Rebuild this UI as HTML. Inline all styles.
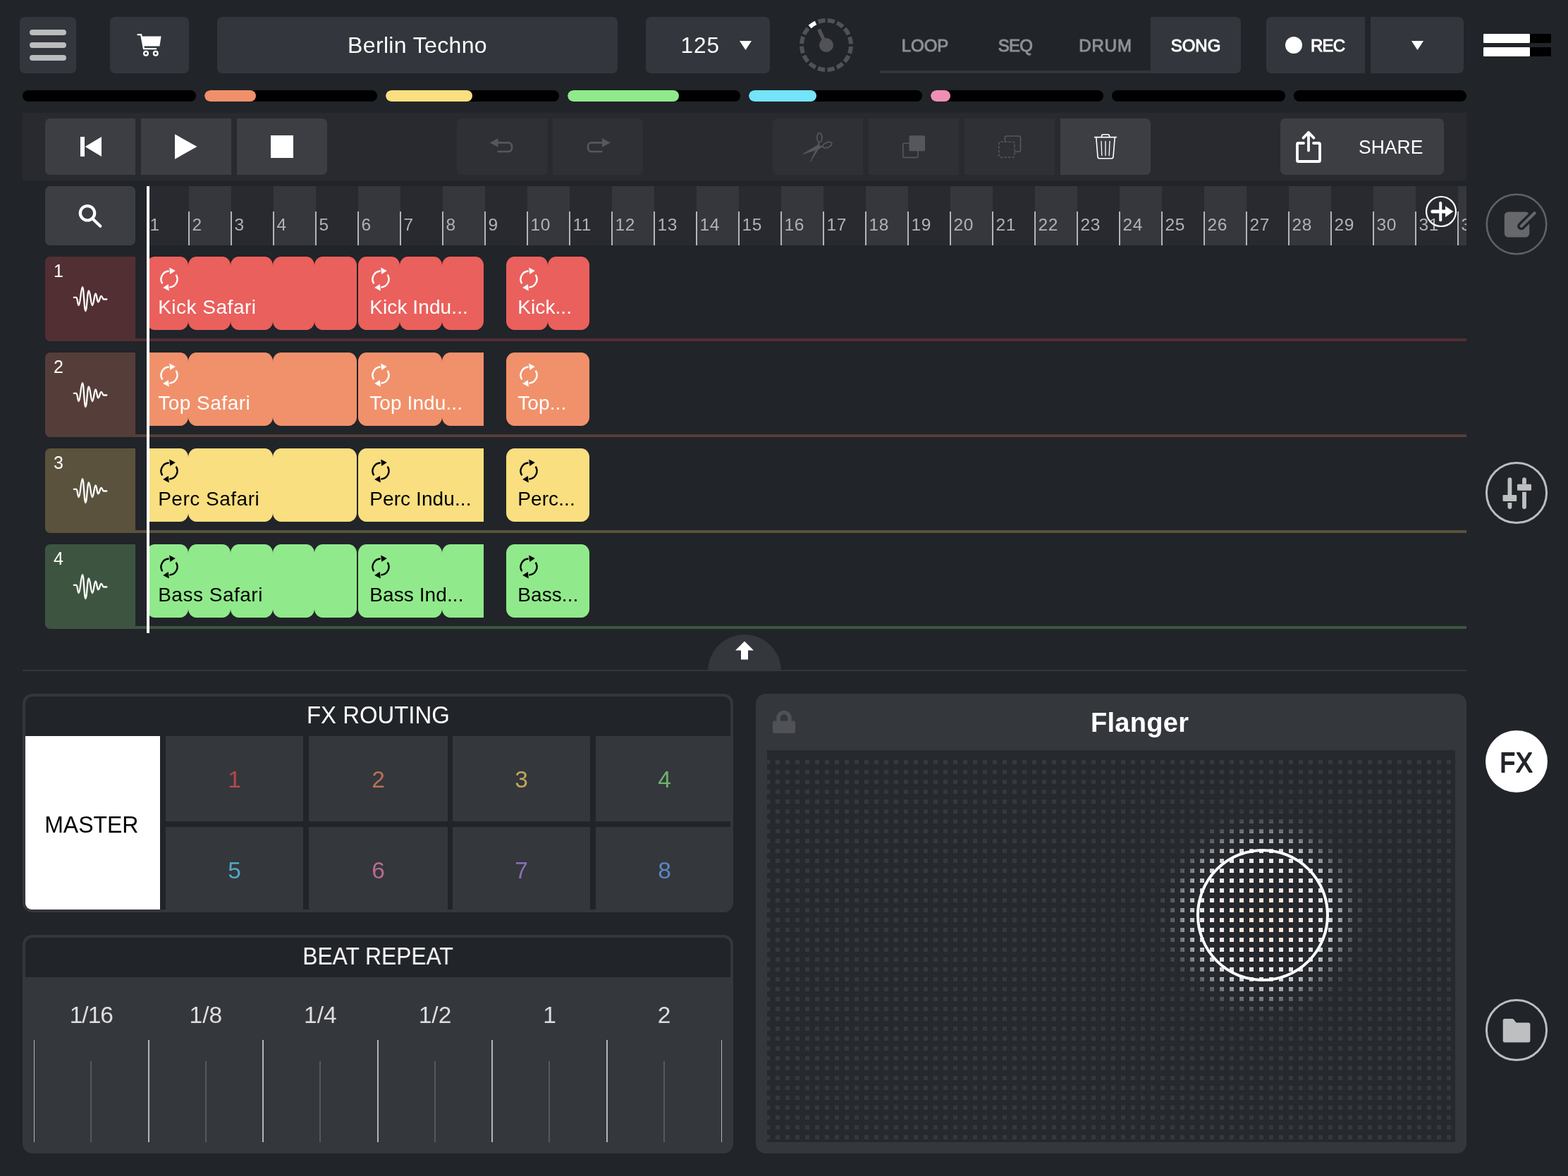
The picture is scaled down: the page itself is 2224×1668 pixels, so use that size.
<!DOCTYPE html>
<html lang="en">
<head>
<meta charset="utf-8">
<title>Berlin Techno - Song</title>
<style>
*{box-sizing:border-box;margin:0;padding:0}
html,body{width:2224px;height:1668px;overflow:hidden;background:#212429}
body{position:relative;font-family:"Liberation Sans",sans-serif;color:#fff}
#root{position:absolute;left:0;top:0;width:2224px;height:1668px;overflow:hidden;will-change:transform}
.a{position:absolute}
.btn{position:absolute;background:#33363c;border-radius:7px}
.c{display:flex;align-items:center;justify-content:center}
svg{position:absolute;overflow:visible}
.bar{position:absolute;top:128px;height:16px;border-radius:8px;background:#000;overflow:hidden}
.bar i{position:absolute;left:0;top:0;height:16px;border-radius:8px}
.tb{position:absolute;top:168px;width:128px;height:80px;background:#3c3e44}
.tb.d{background:#2e3035}
.tab{position:absolute;top:24px;height:80px;padding-top:1px;font-size:24px;color:#8f9093;-webkit-text-stroke:1px currentColor}

.rn{position:absolute;top:303px;font-size:24.5px;letter-spacing:.5px;line-height:30px;color:#b1b2b4}
.rt{position:absolute;top:300px;width:2px;height:48px;background:#b4b5b7}
.th{position:absolute;left:64px;width:128px;height:120px;border-radius:7px 0 0 7px}
.th span{position:absolute;left:12px;top:4px;font-size:25px;line-height:32px}
.tl{position:absolute;left:192px;width:1888px;height:4px}
.sg{position:absolute;height:104px;border-radius:11.5px/12.5px}
.ct{position:absolute;font-size:28px;letter-spacing:.5px;line-height:32px;white-space:nowrap}


.pn{position:absolute;left:32px;width:1008px;border-radius:14px;background:#34373c;overflow:hidden}
.pi{position:absolute;left:4px;top:4px;width:1000px;height:302px;border-radius:10px;background:#212429}
.pt{position:absolute;left:4px;top:4px;width:1000px;height:56px;font-size:34.5px;padding-bottom:3px;border-radius:10px 10px 0 0}
.pt span{display:block;transform:scaleX(.953)}
.fc{position:absolute;background:#34373c;font-size:33.5px;padding-top:2px}
.bl{position:absolute;top:1414px;width:160px;text-align:center;font-size:33.5px;line-height:52px;color:#dddddf}
.mj{position:absolute;top:1475px;width:2px;height:145px;background:#b3b4b6}
.mn{position:absolute;top:1505px;width:2px;height:115px;background:#55585d}

</style>
</head>
<body>
<div id="root">
<!-- ===== TOP BAR ===== -->
<div class="btn" style="left:28px;top:24px;width:80px;height:80px">
  <div class="a" style="left:14px;top:18px;width:52px;height:8px;border-radius:4px;background:#bbbcbe"></div>
  <div class="a" style="left:14px;top:36px;width:52px;height:8px;border-radius:4px;background:#bbbcbe"></div>
  <div class="a" style="left:14px;top:54px;width:52px;height:8px;border-radius:4px;background:#bbbcbe"></div>
</div>
<div class="btn" style="left:156px;top:24px;width:112px;height:80px">
  <svg style="left:38px;top:22px" width="36" height="36" viewBox="0 0 36 36">
    <path d="M1.5 3.2H6.2L10 23.2H27.2" fill="none" stroke="#fff" stroke-width="2.2" stroke-linecap="round" stroke-linejoin="round"/>
    <path d="M7.3 5.6H34.6L32.4 19.4H10z" fill="#fff"/>
    <circle cx="13" cy="29.8" r="2.9" fill="none" stroke="#fff" stroke-width="2.2"/>
    <circle cx="26.8" cy="29.8" r="2.9" fill="none" stroke="#fff" stroke-width="2.2"/>
  </svg>
</div>
<div class="btn c" style="left:308px;top:24px;width:568px;height:80px;font-size:32px;letter-spacing:.35px;padding-top:1px">Berlin Techno</div>
<div class="btn" style="left:916px;top:24px;width:176px;height:80px">
  <span class="a" style="left:49.5px;top:22px;font-size:31.5px;letter-spacing:1px;line-height:36px">125</span>
  <svg style="left:133px;top:34px" width="17" height="13" viewBox="0 0 17 13"><path d="M0 0H17L8.5 13z" fill="#fff"/></svg>
</div>
<!-- knob -->
<svg style="left:1132px;top:24px" width="80" height="80" viewBox="0 0 80 80">
  <circle cx="40" cy="40" r="35" fill="none" stroke="#505257" stroke-width="6" stroke-dasharray="10.14 3.604" stroke-dashoffset="-1.8" transform="rotate(-90 40 40)"/>
  <path d="M16.56 14.01A35 35 0 0 1 24.96 8.40" stroke="#fff" stroke-width="6" fill="none"/>
  <circle cx="40" cy="40" r="10" fill="#505257"/>
  <path d="M40 40L29.5 17.7" stroke="#505257" stroke-width="5.2"/>
</svg>
<!-- tabs -->
<div class="a" style="left:1248px;top:100px;width:384px;height:4px;background:#33363c"></div>
<div class="tab c" style="left:1248px;width:128px">LOOP</div>
<div class="tab c" style="left:1376px;width:128px;letter-spacing:-.8px">SEQ</div>
<div class="tab c" style="left:1504px;width:128px;letter-spacing:.9px">DRUM</div>
<div class="tab c" style="left:1632px;width:128px;background:#33363c;color:#fff;border-radius:0 7px 7px 0">SONG</div>
<!-- rec -->
<div class="btn" style="left:1796px;top:24px;width:140px;height:80px;border-radius:7px 0 0 7px">
  <div class="a" style="left:27px;top:28px;width:24px;height:24px;border-radius:50%;background:#fff"></div>
  <span class="a" style="left:63px;top:23px;font-size:24px;-webkit-text-stroke:1px #fff;letter-spacing:-.8px;line-height:36px">REC</span>
</div>
<div class="btn" style="left:1944px;top:24px;width:132px;height:80px;border-radius:0 7px 7px 0">
  <svg style="left:58px;top:34px" width="17" height="13" viewBox="0 0 17 13"><path d="M0 0H17L8.5 13z" fill="#fff"/></svg>
</div>
<!-- level meter -->
<div class="a" style="left:2104px;top:48px;width:96px;height:13px;background:#000;border-radius:1px"></div>
<div class="a" style="left:2104px;top:67px;width:96px;height:13px;background:#000;border-radius:1px"></div>
<div class="a" style="left:2104px;top:48px;width:66px;height:13px;background:#fff;border-radius:1px"></div>
<div class="a" style="left:2104px;top:67px;width:66px;height:13px;background:#fff;border-radius:1px"></div>

<!-- ===== TRACK LEVEL BARS ===== -->
<div class="bar" style="left:32px;width:246px"></div>
<div class="bar" style="left:290px;width:245px"><i style="width:73px;background:#f0906b"></i></div>
<div class="bar" style="left:547px;width:246px"><i style="width:123px;background:#f9df80"></i></div>
<div class="bar" style="left:805px;width:245px"><i style="width:158px;background:#90ea8b"></i></div>
<div class="bar" style="left:1062px;width:246px"><i style="width:96px;background:#74e4f8"></i></div>
<div class="bar" style="left:1320px;width:245px"><i style="width:28px;background:#f08fb4"></i></div>
<div class="bar" style="left:1577px;width:246px"></div>
<div class="bar" style="left:1835px;width:245px"></div>

<!-- ===== TRANSPORT ===== -->
<div class="a" style="left:32px;top:160px;width:2048px;height:96px;background:#282a30"></div>
<div class="tb" style="left:64px;border-radius:7px 0 0 7px">
  <svg style="left:0;top:0" width="128" height="80"><path d="M50 26h6v28h-6zM56.6 40L80 26v28z" fill="#fff"/></svg>
</div>
<div class="tb" style="left:200px">
  <svg style="left:0;top:0" width="128" height="80"><path d="M48 22.3L79.5 40L48 57.7z" fill="#fff"/></svg>
</div>
<div class="tb" style="left:336px;border-radius:0 7px 7px 0">
  <div class="a" style="left:48px;top:24px;width:32px;height:32px;background:#fff"></div>
</div>
<div class="tb d" style="left:648px;border-radius:7px 0 0 7px">
  <svg style="left:0;top:0" width="128" height="80"><path d="M57 34.4H73a5 5 0 0 1 5 5V42a5 5 0 0 1 -5 5H57.5" fill="none" stroke="#55575c" stroke-width="2.6"/><path d="M46.8 34.4L58.5 28v12.8z" fill="#55575c"/></svg>
</div>
<div class="tb d" style="left:784px;border-radius:0 7px 7px 0">
  <svg style="left:0;top:0" width="128" height="80"><path d="M71 34.4H55a5 5 0 0 0 -5 5V42a5 5 0 0 0 5 5H70.5" fill="none" stroke="#55575c" stroke-width="2.6"/><path d="M81.7 34.4L70 28v12.8z" fill="#55575c"/></svg>
</div>
<div class="tb d" style="left:1096px;border-radius:7px 0 0 7px">
  <svg style="left:0;top:0" width="128" height="80" fill="none" stroke="#55575c" stroke-width="1.7" stroke-linejoin="round">
    <ellipse cx="66.4" cy="27.2" rx="3.6" ry="6.6"/>
    <ellipse cx="77.4" cy="37.6" rx="6.8" ry="3.6" transform="rotate(-22 77.4 37.6)"/>
    <path d="M65.3 33.8L66.3 40.6L53.6 61.2L62.4 42.2z" fill="#55575c" stroke-width="1"/>
    <path d="M70.9 39.6L65.6 43.2L43 50.4L62.6 38.6z" fill="#55575c" stroke-width="1"/>
  </svg>
</div>
<div class="tb d" style="left:1232px">
  <svg style="left:0;top:0" width="128" height="80"><rect x="48.8" y="35.2" width="21.2" height="20.2" rx="1.5" fill="none" stroke="#55575c" stroke-width="1.6"/><rect x="57.5" y="24.3" width="22.5" height="22" rx="1.5" fill="#55575c"/></svg>
</div>
<div class="tb d" style="left:1368px">
  <svg style="left:0;top:0" width="128" height="80" fill="none" stroke="#55575c" stroke-width="1.6"><rect x="57.3" y="25" width="22.2" height="22" rx="2.5"/><rect x="48.8" y="33.2" width="22.2" height="22" rx="2.5" fill="#2e3035" stroke-dasharray="3.6 2"/></svg>
</div>
<div class="tb" style="left:1504px;border-radius:0 7px 7px 0">
  <svg style="left:0;top:0" width="128" height="80" fill="none" stroke="#fff" stroke-width="1.6" stroke-linecap="round" stroke-linejoin="round">
    <path d="M48.6 26.6H79.4M58.4 26.4V25.4A2.6 2.6 0 0 1 61 22.8H67A2.6 2.6 0 0 1 69.600 25.4V26.4"/>
    <path d="M50.8 27L53 54.4A2.6 2.6 0 0 0 55.600 56.8H72.4A2.6 2.6 0 0 0 75 54.4L77.2 27"/>
    <path d="M58 32.500L58.800 52.500M64 32.500V52.500M70 32.500L69.200 52.500" stroke-width="1.3"/>
  </svg>
</div>
<div class="tb" style="left:1816px;width:232px;border-radius:7px">
  <svg style="left:0;top:0" width="232" height="80" fill="none" stroke="#fff" stroke-width="3.8" stroke-linecap="round" stroke-linejoin="round">
    <path d="M33 35H25.500A1.600 1.600 0 0 0 24 36.600V59.400A1.600 1.600 0 0 0 25.600 61H54.400A1.600 1.600 0 0 0 56 59.400V36.600A1.600 1.600 0 0 0 54.400 35H47"/>
    <path d="M40 45.500V20.800M32.600 27.600L40 19.800L47.400 27.600"/>
  </svg>
  <span class="a" style="left:110.5px;top:22px;font-size:28.5px;line-height:36px;transform:scaleX(.93);transform-origin:0 50%">SHARE</span>
</div>

<!-- ===== TIMELINE ===== -->
<div class="btn" style="left:64px;top:264px;width:128px;height:84px;background:#3c3e44"><svg style="left:0;top:0" width="128" height="84" fill="none" stroke="#fff" stroke-width="4.2" stroke-linecap="round"><circle cx="60" cy="38.300" r="10.200"/><path d="M67.800 46.800L78.300 56.800"/></svg></div>
<div class="a" style="left:208px;top:264px;width:1872px;height:84px;overflow:hidden;background:#282a2f">
<div class="a" style="left:60px;top:0;width:60px;height:84px;background:#36373c"></div>
<div class="a" style="left:180px;top:0;width:60px;height:84px;background:#36373c"></div>
<div class="a" style="left:300px;top:0;width:60px;height:84px;background:#36373c"></div>
<div class="a" style="left:420px;top:0;width:60px;height:84px;background:#36373c"></div>
<div class="a" style="left:540px;top:0;width:60px;height:84px;background:#36373c"></div>
<div class="a" style="left:660px;top:0;width:60px;height:84px;background:#36373c"></div>
<div class="a" style="left:780px;top:0;width:60px;height:84px;background:#36373c"></div>
<div class="a" style="left:900px;top:0;width:60px;height:84px;background:#36373c"></div>
<div class="a" style="left:1020px;top:0;width:60px;height:84px;background:#36373c"></div>
<div class="a" style="left:1140px;top:0;width:60px;height:84px;background:#36373c"></div>
<div class="a" style="left:1260px;top:0;width:60px;height:84px;background:#36373c"></div>
<div class="a" style="left:1380px;top:0;width:60px;height:84px;background:#36373c"></div>
<div class="a" style="left:1500px;top:0;width:60px;height:84px;background:#36373c"></div>
<div class="a" style="left:1620px;top:0;width:60px;height:84px;background:#36373c"></div>
<div class="a" style="left:1740px;top:0;width:60px;height:84px;background:#36373c"></div>
<div class="a" style="left:1860px;top:0;width:60px;height:84px;background:#36373c"></div>
<span class="rn" style="left:4.5px;top:40px">1</span>
<div class="rt" style="left:59px;top:36px"></div>
<span class="rn" style="left:64.5px;top:40px">2</span>
<div class="rt" style="left:119px;top:36px"></div>
<span class="rn" style="left:124.5px;top:40px">3</span>
<div class="rt" style="left:179px;top:36px"></div>
<span class="rn" style="left:184.5px;top:40px">4</span>
<div class="rt" style="left:239px;top:36px"></div>
<span class="rn" style="left:244.5px;top:40px">5</span>
<div class="rt" style="left:299px;top:36px"></div>
<span class="rn" style="left:304.5px;top:40px">6</span>
<div class="rt" style="left:359px;top:36px"></div>
<span class="rn" style="left:364.5px;top:40px">7</span>
<div class="rt" style="left:419px;top:36px"></div>
<span class="rn" style="left:424.5px;top:40px">8</span>
<div class="rt" style="left:479px;top:36px"></div>
<span class="rn" style="left:484.5px;top:40px">9</span>
<div class="rt" style="left:539px;top:36px"></div>
<span class="rn" style="left:544.5px;top:40px">10</span>
<div class="rt" style="left:599px;top:36px"></div>
<span class="rn" style="left:604.5px;top:40px">11</span>
<div class="rt" style="left:659px;top:36px"></div>
<span class="rn" style="left:664.5px;top:40px">12</span>
<div class="rt" style="left:719px;top:36px"></div>
<span class="rn" style="left:724.5px;top:40px">13</span>
<div class="rt" style="left:779px;top:36px"></div>
<span class="rn" style="left:784.5px;top:40px">14</span>
<div class="rt" style="left:839px;top:36px"></div>
<span class="rn" style="left:844.5px;top:40px">15</span>
<div class="rt" style="left:899px;top:36px"></div>
<span class="rn" style="left:904.5px;top:40px">16</span>
<div class="rt" style="left:959px;top:36px"></div>
<span class="rn" style="left:964.5px;top:40px">17</span>
<div class="rt" style="left:1019px;top:36px"></div>
<span class="rn" style="left:1024.5px;top:40px">18</span>
<div class="rt" style="left:1079px;top:36px"></div>
<span class="rn" style="left:1084.5px;top:40px">19</span>
<div class="rt" style="left:1139px;top:36px"></div>
<span class="rn" style="left:1144.5px;top:40px">20</span>
<div class="rt" style="left:1199px;top:36px"></div>
<span class="rn" style="left:1204.5px;top:40px">21</span>
<div class="rt" style="left:1259px;top:36px"></div>
<span class="rn" style="left:1264.5px;top:40px">22</span>
<div class="rt" style="left:1319px;top:36px"></div>
<span class="rn" style="left:1324.5px;top:40px">23</span>
<div class="rt" style="left:1379px;top:36px"></div>
<span class="rn" style="left:1384.5px;top:40px">24</span>
<div class="rt" style="left:1439px;top:36px"></div>
<span class="rn" style="left:1444.5px;top:40px">25</span>
<div class="rt" style="left:1499px;top:36px"></div>
<span class="rn" style="left:1504.5px;top:40px">26</span>
<div class="rt" style="left:1559px;top:36px"></div>
<span class="rn" style="left:1564.5px;top:40px">27</span>
<div class="rt" style="left:1619px;top:36px"></div>
<span class="rn" style="left:1624.5px;top:40px">28</span>
<div class="rt" style="left:1679px;top:36px"></div>
<span class="rn" style="left:1684.5px;top:40px">29</span>
<div class="rt" style="left:1739px;top:36px"></div>
<span class="rn" style="left:1744.5px;top:40px">30</span>
<div class="rt" style="left:1799px;top:36px"></div>
<span class="rn" style="left:1804.5px;top:40px">31</span>
<div class="rt" style="left:1859px;top:36px"></div>
<span class="rn" style="left:1864.5px;top:40px">32</span>
</div>
<div class="th" style="top:364px;background:#522f33"><span>1</span><svg style="left:0;top:0" width="128" height="120" fill="none" stroke="#fff" stroke-width="2.3" stroke-linecap="round" stroke-linejoin="round"><path d="M40.8 57.8H44.4C45.79 57.80 46.31 69.10 47.70 69.10C49.93 69.10 50.77 43.20 53.00 43.20C54.81 43.20 55.49 77.00 57.30 77.00C59.23 77.00 59.97 48.50 61.90 48.50C64.04 48.50 64.86 69.10 67.00 69.10C68.93 69.10 69.67 52.50 71.60 52.50C73.15 52.50 73.75 64.40 75.30 64.40C77.11 64.40 77.79 55.80 79.60 55.80C80.99 55.80 81.51 60.50 82.90 60.50H87.3"/></svg></div>
<div class="tl" style="top:480px;background:#522f33"></div>
<div class="sg" style="left:208px;top:364px;width:59px;background:#ea605c"></div>
<div class="sg" style="left:267px;top:364px;width:60px;background:#ea605c"></div>
<div class="sg" style="left:327px;top:364px;width:60px;background:#ea605c"></div>
<div class="sg" style="left:387px;top:364px;width:59px;background:#ea605c"></div>
<div class="sg" style="left:446px;top:364px;width:60px;background:#ea605c"></div>
<svg style="left:240px;top:396px" width="2" height="2"><g fill="none" stroke="#fff" stroke-width="2.4"><path d="M-9.64 6.26A11.5 11.5 0 0 1 -0.40 -11.49"/><path d="M9.64 -6.26A11.5 11.5 0 0 1 0.40 11.49"/></g><path d="M8.8 -11.9L0.2 -16.4L1.2 -7z" fill="#fff"/><path d="M-8.8 11.9L-0.2 16.4L-1.2 7z" fill="#fff"/></svg>
<span class="ct" style="left:224.2px;top:419.5px;color:#fff">Kick Safari</span>
<div class="sg" style="left:508px;top:364px;width:59px;background:#ea605c"></div>
<div class="sg" style="left:567px;top:364px;width:60px;background:#ea605c"></div>
<div class="sg" style="left:627px;top:364px;width:59px;background:#ea605c"></div>
<svg style="left:540px;top:396px" width="2" height="2"><g fill="none" stroke="#fff" stroke-width="2.4"><path d="M-9.64 6.26A11.5 11.5 0 0 1 -0.40 -11.49"/><path d="M9.64 -6.26A11.5 11.5 0 0 1 0.40 11.49"/></g><path d="M8.8 -11.9L0.2 -16.4L1.2 -7z" fill="#fff"/><path d="M-8.8 11.9L-0.2 16.4L-1.2 7z" fill="#fff"/></svg>
<span class="ct" style="left:524.2px;top:419.5px;color:#fff;letter-spacing:.1px">Kick Indu...</span>
<div class="sg" style="left:718px;top:364px;width:59px;background:#ea605c"></div>
<div class="sg" style="left:777px;top:364px;width:59px;background:#ea605c"></div>
<svg style="left:750px;top:396px" width="2" height="2"><g fill="none" stroke="#fff" stroke-width="2.4"><path d="M-9.64 6.26A11.5 11.5 0 0 1 -0.40 -11.49"/><path d="M9.64 -6.26A11.5 11.5 0 0 1 0.40 11.49"/></g><path d="M8.8 -11.9L0.2 -16.4L1.2 -7z" fill="#fff"/><path d="M-8.8 11.9L-0.2 16.4L-1.2 7z" fill="#fff"/></svg>
<span class="ct" style="left:734.2px;top:419.5px;color:#fff;letter-spacing:.1px">Kick...</span>
<div class="th" style="top:500px;background:#553e39"><span>2</span><svg style="left:0;top:0" width="128" height="120" fill="none" stroke="#fff" stroke-width="2.3" stroke-linecap="round" stroke-linejoin="round"><path d="M40.8 57.8H44.4C45.79 57.80 46.31 69.10 47.70 69.10C49.93 69.10 50.77 43.20 53.00 43.20C54.81 43.20 55.49 77.00 57.30 77.00C59.23 77.00 59.97 48.50 61.90 48.50C64.04 48.50 64.86 69.10 67.00 69.10C68.93 69.10 69.67 52.50 71.60 52.50C73.15 52.50 73.75 64.40 75.30 64.40C77.11 64.40 77.79 55.80 79.60 55.80C80.99 55.80 81.51 60.50 82.90 60.50H87.3"/></svg></div>
<div class="tl" style="top:616px;background:#553e39"></div>
<div class="sg" style="left:208px;top:500px;width:59px;background:#f0916b;border-radius:0 11.5px 11.5px 0/0 12.5px 12.5px 0"></div>
<div class="sg" style="left:267px;top:500px;width:120px;background:#f0916b"></div>
<div class="sg" style="left:387px;top:500px;width:119px;background:#f0916b"></div>
<svg style="left:240px;top:532px" width="2" height="2"><g fill="none" stroke="#fff" stroke-width="2.4"><path d="M-9.64 6.26A11.5 11.5 0 0 1 -0.40 -11.49"/><path d="M9.64 -6.26A11.5 11.5 0 0 1 0.40 11.49"/></g><path d="M8.8 -11.9L0.2 -16.4L1.2 -7z" fill="#fff"/><path d="M-8.8 11.9L-0.2 16.4L-1.2 7z" fill="#fff"/></svg>
<span class="ct" style="left:224.2px;top:555.5px;color:#fff">Top Safari</span>
<div class="sg" style="left:508px;top:500px;width:119px;background:#f0916b"></div>
<div class="sg" style="left:627px;top:500px;width:59px;background:#f0916b;border-radius:11.5px 0 0 11.5px/12.5px 0 0 12.5px"></div>
<svg style="left:540px;top:532px" width="2" height="2"><g fill="none" stroke="#fff" stroke-width="2.4"><path d="M-9.64 6.26A11.5 11.5 0 0 1 -0.40 -11.49"/><path d="M9.64 -6.26A11.5 11.5 0 0 1 0.40 11.49"/></g><path d="M8.8 -11.9L0.2 -16.4L1.2 -7z" fill="#fff"/><path d="M-8.8 11.9L-0.2 16.4L-1.2 7z" fill="#fff"/></svg>
<span class="ct" style="left:524.2px;top:555.5px;color:#fff;letter-spacing:.1px">Top Indu...</span>
<div class="sg" style="left:718px;top:500px;width:118px;background:#f0916b"></div>
<svg style="left:750px;top:532px" width="2" height="2"><g fill="none" stroke="#fff" stroke-width="2.4"><path d="M-9.64 6.26A11.5 11.5 0 0 1 -0.40 -11.49"/><path d="M9.64 -6.26A11.5 11.5 0 0 1 0.40 11.49"/></g><path d="M8.8 -11.9L0.2 -16.4L1.2 -7z" fill="#fff"/><path d="M-8.8 11.9L-0.2 16.4L-1.2 7z" fill="#fff"/></svg>
<span class="ct" style="left:734.2px;top:555.5px;color:#fff;letter-spacing:.1px">Top...</span>
<div class="th" style="top:636px;background:#5a523c"><span>3</span><svg style="left:0;top:0" width="128" height="120" fill="none" stroke="#fff" stroke-width="2.3" stroke-linecap="round" stroke-linejoin="round"><path d="M40.8 57.8H44.4C45.79 57.80 46.31 69.10 47.70 69.10C49.93 69.10 50.77 43.20 53.00 43.20C54.81 43.20 55.49 77.00 57.30 77.00C59.23 77.00 59.97 48.50 61.90 48.50C64.04 48.50 64.86 69.10 67.00 69.10C68.93 69.10 69.67 52.50 71.60 52.50C73.15 52.50 73.75 64.40 75.30 64.40C77.11 64.40 77.79 55.80 79.60 55.80C80.99 55.80 81.51 60.50 82.90 60.50H87.3"/></svg></div>
<div class="tl" style="top:752px;background:#5a523c"></div>
<div class="sg" style="left:208px;top:636px;width:59px;background:#f9df80;border-radius:0 11.5px 11.5px 0/0 12.5px 12.5px 0"></div>
<div class="sg" style="left:267px;top:636px;width:120px;background:#f9df80"></div>
<div class="sg" style="left:387px;top:636px;width:119px;background:#f9df80"></div>
<svg style="left:240px;top:668px" width="2" height="2"><g fill="none" stroke="#000" stroke-width="2.4"><path d="M-9.64 6.26A11.5 11.5 0 0 1 -0.40 -11.49"/><path d="M9.64 -6.26A11.5 11.5 0 0 1 0.40 11.49"/></g><path d="M8.8 -11.9L0.2 -16.4L1.2 -7z" fill="#000"/><path d="M-8.8 11.9L-0.2 16.4L-1.2 7z" fill="#000"/></svg>
<span class="ct" style="left:224.2px;top:691.5px;color:#000">Perc Safari</span>
<div class="sg" style="left:508px;top:636px;width:178px;background:#f9df80;border-radius:11.5px 0 0 11.5px/12.5px 0 0 12.5px"></div>
<svg style="left:540px;top:668px" width="2" height="2"><g fill="none" stroke="#000" stroke-width="2.4"><path d="M-9.64 6.26A11.5 11.5 0 0 1 -0.40 -11.49"/><path d="M9.64 -6.26A11.5 11.5 0 0 1 0.40 11.49"/></g><path d="M8.8 -11.9L0.2 -16.4L1.2 -7z" fill="#000"/><path d="M-8.8 11.9L-0.2 16.4L-1.2 7z" fill="#000"/></svg>
<span class="ct" style="left:524.2px;top:691.5px;color:#000;letter-spacing:.1px">Perc Indu...</span>
<div class="sg" style="left:718px;top:636px;width:118px;background:#f9df80"></div>
<svg style="left:750px;top:668px" width="2" height="2"><g fill="none" stroke="#000" stroke-width="2.4"><path d="M-9.64 6.26A11.5 11.5 0 0 1 -0.40 -11.49"/><path d="M9.64 -6.26A11.5 11.5 0 0 1 0.40 11.49"/></g><path d="M8.8 -11.9L0.2 -16.4L1.2 -7z" fill="#000"/><path d="M-8.8 11.9L-0.2 16.4L-1.2 7z" fill="#000"/></svg>
<span class="ct" style="left:734.2px;top:691.5px;color:#000;letter-spacing:.1px">Perc...</span>
<div class="th" style="top:772px;background:#3d5540"><span>4</span><svg style="left:0;top:0" width="128" height="120" fill="none" stroke="#fff" stroke-width="2.3" stroke-linecap="round" stroke-linejoin="round"><path d="M40.8 57.8H44.4C45.79 57.80 46.31 69.10 47.70 69.10C49.93 69.10 50.77 43.20 53.00 43.20C54.81 43.20 55.49 77.00 57.30 77.00C59.23 77.00 59.97 48.50 61.90 48.50C64.04 48.50 64.86 69.10 67.00 69.10C68.93 69.10 69.67 52.50 71.60 52.50C73.15 52.50 73.75 64.40 75.30 64.40C77.11 64.40 77.79 55.80 79.60 55.80C80.99 55.80 81.51 60.50 82.90 60.50H87.3"/></svg></div>
<div class="tl" style="top:888px;background:#3d5540"></div>
<div class="sg" style="left:208px;top:772px;width:59px;background:#90ea8b"></div>
<div class="sg" style="left:267px;top:772px;width:60px;background:#90ea8b"></div>
<div class="sg" style="left:327px;top:772px;width:60px;background:#90ea8b"></div>
<div class="sg" style="left:387px;top:772px;width:59px;background:#90ea8b"></div>
<div class="sg" style="left:446px;top:772px;width:60px;background:#90ea8b"></div>
<svg style="left:240px;top:804px" width="2" height="2"><g fill="none" stroke="#000" stroke-width="2.4"><path d="M-9.64 6.26A11.5 11.5 0 0 1 -0.40 -11.49"/><path d="M9.64 -6.26A11.5 11.5 0 0 1 0.40 11.49"/></g><path d="M8.8 -11.9L0.2 -16.4L1.2 -7z" fill="#000"/><path d="M-8.8 11.9L-0.2 16.4L-1.2 7z" fill="#000"/></svg>
<span class="ct" style="left:224.2px;top:827.5px;color:#000">Bass Safari</span>
<div class="sg" style="left:508px;top:772px;width:119px;background:#90ea8b"></div>
<div class="sg" style="left:627px;top:772px;width:59px;background:#90ea8b;border-radius:11.5px 0 0 11.5px/12.5px 0 0 12.5px"></div>
<svg style="left:540px;top:804px" width="2" height="2"><g fill="none" stroke="#000" stroke-width="2.4"><path d="M-9.64 6.26A11.5 11.5 0 0 1 -0.40 -11.49"/><path d="M9.64 -6.26A11.5 11.5 0 0 1 0.40 11.49"/></g><path d="M8.8 -11.9L0.2 -16.4L1.2 -7z" fill="#000"/><path d="M-8.8 11.9L-0.2 16.4L-1.2 7z" fill="#000"/></svg>
<span class="ct" style="left:524.2px;top:827.5px;color:#000;letter-spacing:.1px">Bass Ind...</span>
<div class="sg" style="left:718px;top:772px;width:118px;background:#90ea8b"></div>
<svg style="left:750px;top:804px" width="2" height="2"><g fill="none" stroke="#000" stroke-width="2.4"><path d="M-9.64 6.26A11.5 11.5 0 0 1 -0.40 -11.49"/><path d="M9.64 -6.26A11.5 11.5 0 0 1 0.40 11.49"/></g><path d="M8.8 -11.9L0.2 -16.4L1.2 -7z" fill="#000"/><path d="M-8.8 11.9L-0.2 16.4L-1.2 7z" fill="#000"/></svg>
<span class="ct" style="left:734.2px;top:827.5px;color:#000;letter-spacing:.1px">Bass...</span>
<div class="a" style="left:208px;top:264px;width:4px;height:634px;background:#fff"></div>
<svg style="left:2022px;top:278px" width="44" height="44"><circle cx="22" cy="22" r="21" fill="none" stroke="#fff" stroke-width="2.2"/><path d="M21.200 9.800V34.200" stroke="#fff" stroke-width="4" stroke-linecap="round"/><path d="M9.800 22H19" stroke="#fff" stroke-width="5" stroke-linecap="round"/><path d="M23 19.500H28V14.300L39.400 22L28 30V24.500H23z" fill="#fff"/></svg>
<div class="a" style="left:32px;top:950px;width:2048px;height:2px;background:#33363b"></div>
<div class="a" style="left:1004px;top:900px;width:104px;height:52px;border-radius:52px 52px 0 0;background:#34373c"><svg style="left:0;top:0" width="104" height="52"><path d="M52 9.500L65 22.500H57V35.500H47V22.500H39z" fill="#fff"/></svg></div>
<!-- ===== FX ROUTING ===== -->
<div class="pn" style="top:984px;height:310px">
<div class="pi"></div>
<div class="pt c"><span>FX ROUTING</span></div>
<div class="a c" style="left:4px;top:60px;width:191px;height:246px;background:#fff;color:#000;font-size:33.5px;padding-top:5px;padding-right:3px;border-radius:0 0 0 9px"><span style="display:block;transform:scaleX(.955)">MASTER</span></div>
<div class="fc c" style="left:203.0px;top:60px;width:195.0px;height:121px;color:#b5494c">1</div>
<div class="fc c" style="left:406.0px;top:60px;width:197.0px;height:121px;color:#b97255">2</div>
<div class="fc c" style="left:610.0px;top:60px;width:195.0px;height:121px;color:#bfa85a">3</div>
<div class="fc c" style="left:813.0px;top:60px;width:195.0px;height:121px;color:#6fb26c">4</div>
<div class="fc c" style="left:203.0px;top:189px;width:195.0px;height:121px;color:#4fa9c1">5</div>
<div class="fc c" style="left:406.0px;top:189px;width:197.0px;height:121px;color:#b86b8f">6</div>
<div class="fc c" style="left:610.0px;top:189px;width:195.0px;height:121px;color:#8a6fb5">7</div>
<div class="fc c" style="left:813.0px;top:189px;width:195.0px;height:121px;color:#5b86c4">8</div>
</div>
<!-- ===== BEAT REPEAT ===== -->
<div class="pn" style="top:1326px;height:310px;background:#34373c">
<div class="pt c" style="background:#212429"><span style="transform:scaleX(.92)">BEAT REPEAT</span></div>
</div>
<div class="mj" style="width:1px;left:48px"></div>
<div class="mj" style="left:210px"></div>
<div class="mj" style="left:372px"></div>
<div class="mj" style="left:535px"></div>
<div class="mj" style="left:697px"></div>
<div class="mj" style="left:860px"></div>
<div class="mj" style="width:1px;left:1023px"></div>
<div class="mn" style="left:128px"></div>
<div class="bl" style="left:49.3px;letter-spacing:-1px">1/16</div>
<div class="mn" style="left:291px"></div>
<div class="bl" style="left:211.9px">1/8</div>
<div class="mn" style="left:453px"></div>
<div class="bl" style="left:374.4px">1/4</div>
<div class="mn" style="left:616px"></div>
<div class="bl" style="left:537.0px">1/2</div>
<div class="mn" style="left:778px"></div>
<div class="bl" style="left:699.5px">1</div>
<div class="mn" style="left:941px"></div>
<div class="bl" style="left:862.0px">2</div>
<!-- ===== FLANGER ===== -->
<div class="a" style="left:1072px;top:984px;width:1008px;height:652px;border-radius:14px;background:#34373c"></div>
<svg style="left:1096px;top:1008px" width="32" height="32"><path d="M0 16.600A2 2 0 0 1 2 14.600H30A2 2 0 0 1 32 16.600V30A2 2 0 0 1 30 32H2A2 2 0 0 1 0 30z" fill="#4f5156"/><path d="M8 16V10.500A8 8 0 0 1 24 10.500V16" fill="none" stroke="#4f5156" stroke-width="5.600"/></svg>
<span class="a" style="left:1547px;top:1002px;font-size:38px;font-weight:bold;letter-spacing:.3px;line-height:46px">Flanger</span>
<div class="a" style="left:1088px;top:1064px;width:976px;height:556px;background:#26292e;overflow:hidden">
<div class="a" style="left:-2px;top:14px;width:972px;height:538px;background:linear-gradient(to right,transparent 6px,#26292e 6px) 0 0/14px 14px,linear-gradient(to bottom,transparent 6px,#26292e 6px) 0 0/14px 14px,radial-gradient(circle at 704.6px 220.0px,#fde0c4 0,#fbe6d8 38px,#efe6ea 70px,#e4e4e9 92px,#c3c4c8 102px,#8e9094 114px,#5e6165 126px,#46494e 137px,rgba(53,56,61,0) 150px),#35383d"></div>
<div class="a" style="left:608.6px;top:140.0px;width:188px;height:188px;border:4px solid #fff;border-radius:50%"></div>
</div>
<!-- ===== SIDEBAR ===== -->
<svg style="left:2107px;top:274px" width="88" height="88"><circle cx="44" cy="44" r="42.300" fill="none" stroke="#606266" stroke-width="2.600"/><rect x="26.800" y="26.500" width="35.400" height="36" rx="5.500" fill="#66686c"/><path d="M69.600 28.300L50.700 46.700" stroke="#212429" stroke-width="11" stroke-linecap="round"/><path d="M69.600 28.300L50.700 46.700" stroke="#66686c" stroke-width="4.200" stroke-linecap="round"/></svg>
<svg style="left:2107px;top:655px" width="88" height="88"><circle cx="44" cy="44" r="42.600" fill="none" stroke="#bcbdbf" stroke-width="3"/><g fill="#bebfc1"><rect x="31.500" y="22.200" width="5.800" height="44.700" rx="2.900"/><rect x="52.100" y="22.200" width="5.800" height="44.700" rx="2.900"/><rect x="24.500" y="47" width="19.700" height="11" rx="1.200" fill="#212429"/><rect x="45" y="31.800" width="20" height="11" rx="1.200" fill="#212429"/><rect x="24.500" y="47" width="19.700" height="9" rx="1.200"/><rect x="45" y="31.800" width="20" height="9" rx="1.200"/></g></svg>
<svg style="left:2107px;top:1036px" width="88" height="88"><circle cx="44" cy="44" r="44" fill="#fff"/><text x="20.400" y="54.100" transform="scale(1,1.1)" font-family="Liberation Sans, sans-serif" font-size="35" letter-spacing="1.6" fill="#22252a" stroke="#22252a" stroke-width="1.700" stroke-linejoin="round">FX</text></svg>
<svg style="left:2107px;top:1417px" width="88" height="88"><circle cx="44" cy="44" r="42.600" fill="none" stroke="#bcbdbf" stroke-width="3"/><path d="M24.700 30.600A2.600 2.600 0 0 1 27.300 28H37.800A3 3 0 0 1 40.200 29.200L43.600 33.600H60.800A2.600 2.600 0 0 1 63.400 36.200V58.800A2.600 2.600 0 0 1 60.800 61.400H27.300A2.600 2.600 0 0 1 24.700 58.800z" fill="#bebfc1"/></svg>
</div>
</body>
</html>
